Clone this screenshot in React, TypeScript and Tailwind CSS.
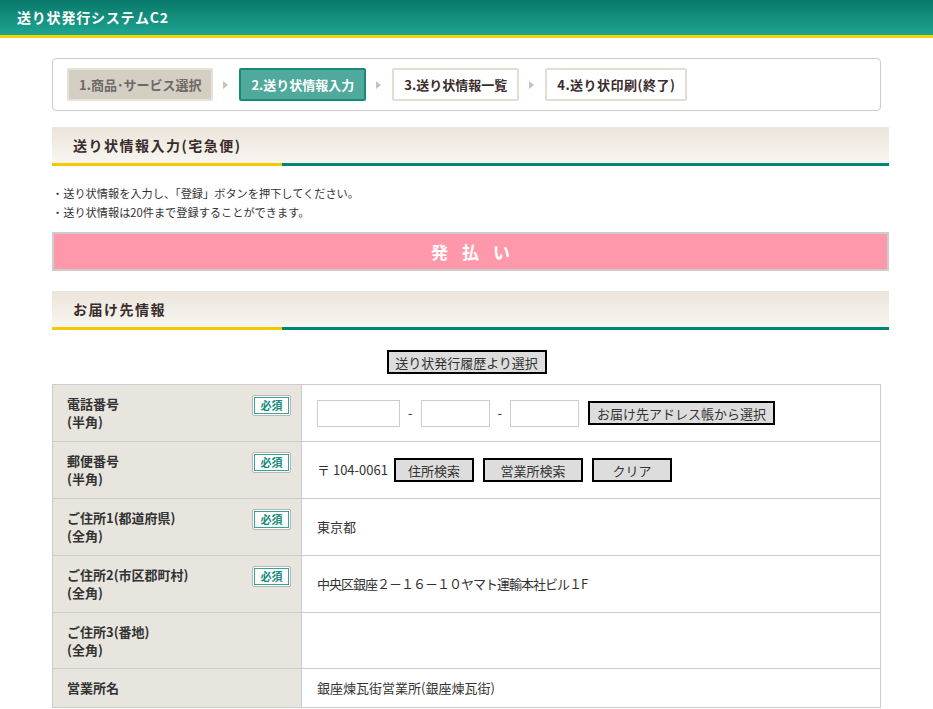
import React from "react";

const font = { fontFamily: '"Noto Sans CJK JP", "Liberation Sans", sans-serif' };

function Arrow() {
  return (
    <svg width="8" height="10" viewBox="0 0 8 10" className="mx-[9px] shrink-0">
      <path d="M1 1 L6 5 L1 9 Z" fill="#c8c2b4" />
    </svg>
  );
}

function SectionHeader({ title }: { title: string }) {
  return (
    <div className="w-[837px]">
      <div className="h-[36px] flex items-center pl-[21px] bg-gradient-to-b from-[#ebe5da] to-[#f8f6f1]">
        <h2 className="text-[14px] font-bold text-[#3a2c2c] tracking-[1.5px]">{title}</h2>
      </div>
      <div className="flex h-[3px]">
        <div className="w-[230px] bg-[#f7c800]" />
        <div className="flex-1 bg-[#008573]" />
      </div>
    </div>
  );
}

function Required() {
  return (
    <span className="w-[39px] h-[21px] flex items-center justify-center bg-white border border-[#b8b8b8] rounded-[2px] p-[1px]">
      <span className="w-full h-full flex items-center justify-center border border-[#3aa595] text-[11px] font-bold text-[#1a8c7c] leading-none">
        必須
      </span>
    </span>
  );
}

function GrayButton({ children, w }: { children: React.ReactNode; w: string }) {
  return (
    <button className={`${w} h-[24px] border-2 border-black bg-[#dddddd] text-[13px] text-[#333] leading-none`}>
      {children}
    </button>
  );
}

function Row({
  label,
  sub,
  required,
  h,
  children,
}: {
  label: string;
  sub?: string;
  required?: boolean;
  h: string;
  children?: React.ReactNode;
}) {
  return (
    <div className={`flex ${h} border-b border-[#cccccc] last:border-b-0`}>
      <div
        className={`w-[249px] bg-[#e8e5df] border-r border-[#cccccc] flex justify-between pl-[14px] pr-[10px] ${
          sub ? "pt-[10px]" : "items-center"
        }`}
      >
        <div className="text-[13px] font-bold text-[#333] leading-[18px]">
          <div>{label}</div>
          {sub && <div>{sub}</div>}
        </div>
        {required && <Required />}
      </div>
      <div className="flex-1 flex items-center pl-[15px] text-[13px] text-[#333]">{children}</div>
    </div>
  );
}

export default function App() {
  return (
    <div className="w-[933px] h-[709px] bg-white overflow-hidden" style={font}>
      {/* Header */}
      <div className="h-[38px] bg-gradient-to-b from-[#08796a] to-[#1fa592] border-b-[3px] border-[#f7d200] flex items-center pl-[17px]">
        <h1 className="text-[14px] font-bold text-white tracking-[0.8px]">送り状発行システムC2</h1>
      </div>

      <div className="pl-[52px] pt-[20px]">
        {/* Steps */}
        <div className="w-[829px] h-[53px] border border-[#cccccc] rounded-[4px] flex items-center pl-[14px]">
          <div className="h-[33px] px-[10px] flex items-center bg-[#d3cfc3] border-2 border-[#e6e2d8] rounded-[2px] text-[13px] font-bold text-[#6d6a66]">
            1.商品･サービス選択
          </div>
          <Arrow />
          <div className="h-[33px] px-[10px] flex items-center bg-[#4faa9c] border-2 border-[#17897a] rounded-[2px] text-[13px] font-bold text-white">
            2.送り状情報入力
          </div>
          <Arrow />
          <div className="h-[33px] px-[10px] flex items-center bg-white border-2 border-[#e2ded4] rounded-[2px] text-[13px] font-bold text-[#3b2c2c]">
            3.送り状情報一覧
          </div>
          <Arrow />
          <div className="h-[33px] px-[10px] flex items-center bg-white border-2 border-[#e2ded4] rounded-[2px] text-[13px] font-bold text-[#3b2c2c] tracking-[0.5px]">
            4.送り状印刷(終了)
          </div>
        </div>

        <div className="mt-[16px]">
          <SectionHeader title="送り状情報入力(宅急便)" />
        </div>

        <div className="pt-[18px] text-[11.2px] text-[#333] leading-[19px]">
          <p>・送り状情報を入力し、「登録」ボタンを押下してください。</p>
          <p>・送り状情報は20件まで登録することができます。</p>
        </div>

        {/* Payment bar */}
        <div className="mt-[10px] w-[837px] h-[39px] border-2 border-[#cccccc] bg-[#ff98aa] flex items-center justify-center">
          <span className="text-[17px] font-bold text-white tracking-[14px] pl-[14px]">発払い</span>
        </div>

        <div className="mt-[20px]">
          <SectionHeader title="お届け先情報" />
        </div>

        <div className="w-[829px] flex justify-center pt-[20px] pb-[10px]">
          <GrayButton w="w-[160px]">送り状発行履歴より選択</GrayButton>
        </div>

        {/* Form table */}
        <div className="w-[829px] border border-[#cccccc]">
          <Row label="電話番号" sub="(半角)" required h="h-[57px]">
            <input className="w-[83px] h-[27px] border border-[#cccccc]" />
            <span className="mx-[8px]">-</span>
            <input className="w-[69px] h-[27px] border border-[#cccccc]" />
            <span className="mx-[8px]">-</span>
            <input className="w-[69px] h-[27px] border border-[#cccccc]" />
            <span className="ml-[9px]">
              <GrayButton w="w-[187px]">お届け先アドレス帳から選択</GrayButton>
            </span>
          </Row>
          <Row label="郵便番号" sub="(半角)" required h="h-[57px]">
            <span className="mr-[6px]">〒 104-0061</span>
            <GrayButton w="w-[80px]">住所検索</GrayButton>
            <span className="ml-[9px]">
              <GrayButton w="w-[100px]">営業所検索</GrayButton>
            </span>
            <span className="ml-[9px]">
              <GrayButton w="w-[80px]">クリア</GrayButton>
            </span>
          </Row>
          <Row label="ご住所1(都道府県)" sub="(全角)" required h="h-[57px]">
            東京都
          </Row>
          <Row label="ご住所2(市区郡町村)" sub="(全角)" required h="h-[57px]">
            <span className="tracking-[-1px]">中央区銀座２－１６－１０ヤマト運輸本社ビル１F</span>
          </Row>
          <Row label="ご住所3(番地)" sub="(全角)" h="h-[56px]" />
          <Row label="営業所名" h="h-[38px]">
            銀座煉瓦街営業所(銀座煉瓦街)
          </Row>
        </div>
      </div>
    </div>
  );
}
